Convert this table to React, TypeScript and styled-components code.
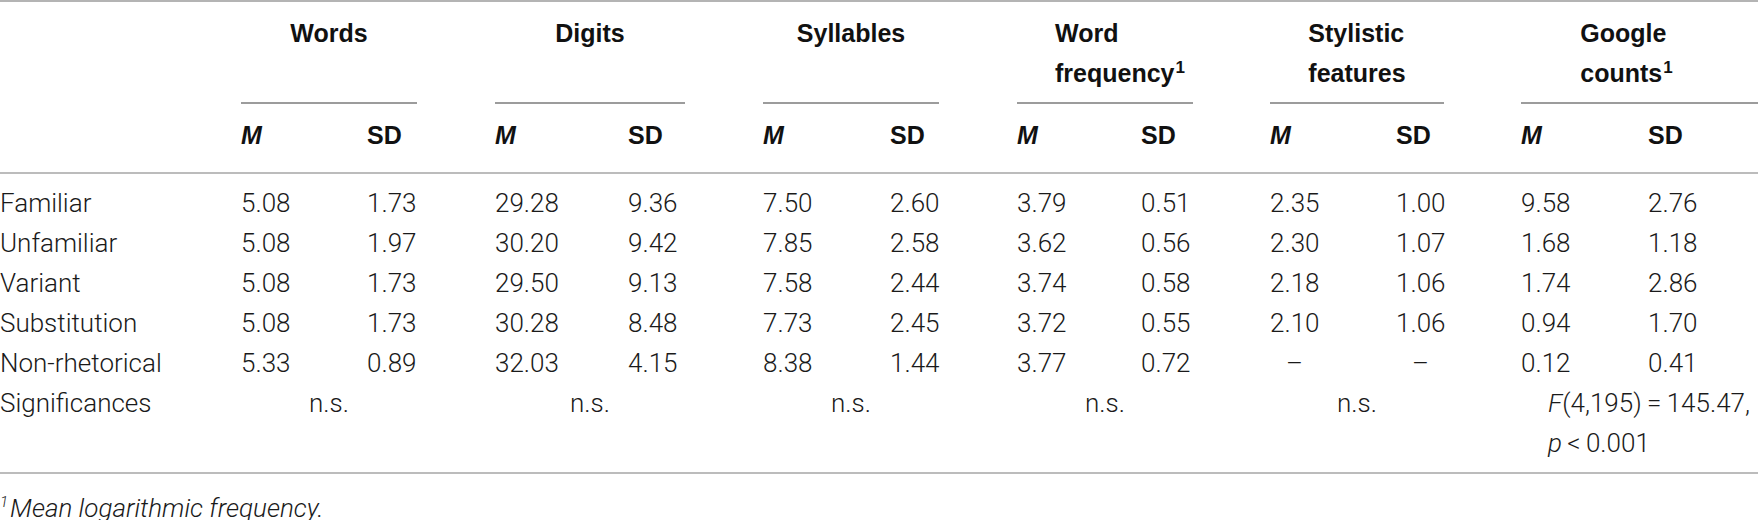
import React from 'react';
import styled, { createGlobalStyle } from 'styled-components';

const GlobalStyle = createGlobalStyle`
  html, body { margin: 0; padding: 0; background: #ffffff; }
  body { width: 1758px; height: 520px; overflow: hidden; }
`;

const COLS =
  '241px 126px 50px 78px 133px 57px 78px 127px 49px 78px 124px 52px 77px 126px 48px 77px 127px 110px';

const Table = styled.div`
  width: 1758px;
  border-top: 2px solid #b4b4b4;
  font-family: Roboto, 'Liberation Sans', sans-serif;
  font-weight: 300;
  font-size: 26px;
  color: #1a1a1a;
`;

const Head = styled.div`
  border-bottom: 2px solid #bcbcbc;
`;

const Body = styled.div`
  padding: 9px 0 9px;
  border-bottom: 2px solid #bcbcbc;
`;

const Row = styled.div<{ $pt?: number; $pb?: number }>`
  display: grid;
  grid-template-columns: ${COLS};
  padding: ${(p) => p.$pt ?? 0}px 0 ${(p) => p.$pb ?? 0}px;
  line-height: 40px;
`;

const TitleCell = styled.div<{ $col: number; $shift: number }>`
  grid-column: ${(p) => p.$col} / span 2;
  display: flex;
  justify-content: center;
  align-items: flex-start;
  padding: 11px ${(p) => Math.max(0, -2 * p.$shift)}px 9px ${(p) => Math.max(0, 2 * p.$shift)}px;
  border-bottom: 2px solid #9c9c9c;
  font-family: 'Liberation Sans', Arial, sans-serif;
  font-size: 25px;
  font-weight: 700;
  color: #111;
`;

const TitleText = styled.div`
  text-align: left;
  white-space: nowrap;
`;

const Sup = styled.sup`
  font-size: 17px;
  line-height: 0;
  vertical-align: 9px;
  margin-left: 1px;
`;

const HeadCell = styled.div<{ $col: number; $italic?: boolean }>`
  grid-column: ${(p) => p.$col};
  font-family: 'Liberation Sans', Arial, sans-serif;
  font-size: 25px;
  font-weight: 700;
  font-style: ${(p) => (p.$italic ? 'italic' : 'normal')};
  color: #111;
`;

const Label = styled.div`
  grid-column: 1;
  white-space: nowrap;
`;

const Cell = styled.div<{ $col: number }>`
  grid-column: ${(p) => p.$col};
  white-space: nowrap;
`;

const Dash = styled.span`
  display: inline-block;
  width: 49px;
  text-align: center;
`;

const SpanCell = styled.div<{ $col: number }>`
  grid-column: ${(p) => p.$col} / span 2;
  text-align: center;
`;

const StatCell = styled.div<{ $col: number }>`
  grid-column: ${(p) => p.$col} / span 2;
  padding-left: 27px;
  white-space: nowrap;
`;

const Var = styled.i`
  font-style: italic;
`;

const Footnote = styled.div`
  padding-top: 14px;
  line-height: 40px;
  font-family: Roboto, 'Liberation Sans', sans-serif;
  font-weight: 300;
  font-style: italic;
  font-size: 26px;
  color: #1a1a1a;
`;

const FootSup = styled.sup`
  font-size: 15px;
  line-height: 0;
  vertical-align: 10px;
  margin-right: 2px;
`;

type Group = { lines: string[]; sup?: boolean; shift: number };

const groups: Group[] = [
  { lines: ['Words'], shift: 0 },
  { lines: ['Digits'], shift: 0 },
  { lines: ['Syllables'], shift: 0 },
  { lines: ['Word', 'frequency'], sup: true, shift: 15 },
  { lines: ['Stylistic', 'features'], shift: 0 },
  { lines: ['Google', 'counts'], sup: true, shift: -13 },
];

const rows: { label: string; values: string[] }[] = [
  { label: 'Familiar', values: ['5.08', '1.73', '29.28', '9.36', '7.50', '2.60', '3.79', '0.51', '2.35', '1.00', '9.58', '2.76'] },
  { label: 'Unfamiliar', values: ['5.08', '1.97', '30.20', '9.42', '7.85', '2.58', '3.62', '0.56', '2.30', '1.07', '1.68', '1.18'] },
  { label: 'Variant', values: ['5.08', '1.73', '29.50', '9.13', '7.58', '2.44', '3.74', '0.58', '2.18', '1.06', '1.74', '2.86'] },
  { label: 'Substitution', values: ['5.08', '1.73', '30.28', '8.48', '7.73', '2.45', '3.72', '0.55', '2.10', '1.06', '0.94', '1.70'] },
  { label: 'Non-rhetorical', values: ['5.33', '0.89', '32.03', '4.15', '8.38', '1.44', '3.77', '0.72', '–', '–', '0.12', '0.41'] },
];

const mCol = (g: number) => 2 + 3 * g;

export default function App() {
  return (
    <>
      <GlobalStyle />
      <Table>
        <Head>
          <Row>
            {groups.map((g, i) => (
              <TitleCell key={i} $col={mCol(i)} $shift={g.shift}>
                <TitleText>
                  {g.lines.map((l, j) => (
                    <div key={j}>
                      {l}
                      {g.sup && j === g.lines.length - 1 ? <Sup>1</Sup> : null}
                    </div>
                  ))}
                </TitleText>
              </TitleCell>
            ))}
          </Row>
          <Row $pt={11} $pb={17}>
            {groups.map((_, i) => (
              <React.Fragment key={i}>
                <HeadCell $col={mCol(i)} $italic>
                  M
                </HeadCell>
                <HeadCell $col={mCol(i) + 1}>SD</HeadCell>
              </React.Fragment>
            ))}
          </Row>
        </Head>
        <Body>
          {rows.map((r) => (
            <Row key={r.label}>
              <Label>{r.label}</Label>
              {r.values.map((v, k) => (
                <Cell key={k} $col={mCol(Math.floor(k / 2)) + (k % 2)}>
                  {v === '–' ? <Dash>–</Dash> : v}
                </Cell>
              ))}
            </Row>
          ))}
          <Row>
            <Label>Significances</Label>
            {[0, 1, 2, 3, 4].map((g) => (
              <SpanCell key={g} $col={mCol(g)}>
                n.s.
              </SpanCell>
            ))}
            <StatCell $col={mCol(5)}>
              <Var>F</Var>(4,195)&thinsp;=&thinsp;145.47,
              <br />
              <Var>p</Var>&thinsp;&lt;&thinsp;0.001
            </StatCell>
          </Row>
        </Body>
      </Table>
      <Footnote>
        <FootSup>1</FootSup>Mean logarithmic frequency.
      </Footnote>
    </>
  );
}
